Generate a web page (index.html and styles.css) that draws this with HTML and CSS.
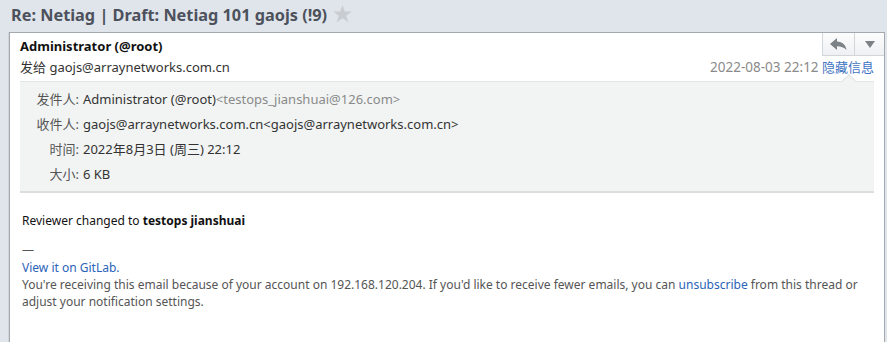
FILE: index.html
```html
<!DOCTYPE html>
<html lang="zh-CN">
<head>
  <meta charset="UTF-8">
  <title>Re: Netiag | Draft: Netiag 101 gaojs (!9)</title>
  <link rel="stylesheet" href="styles.css">
</head>
<body>
  <h1 class="subject">
    Re: Netiag | Draft: Netiag 101 gaojs (!9)
    <svg class="star" width="19" height="18" viewBox="0 0 24 23"><path d="M12 0l2.9 8.2H24l-7.3 5.4 2.8 8.6L12 16.9l-7.5 5.3 2.8-8.6L0 8.2h9.1z" fill="#c9cdd2"/></svg>
  </h1>

  <div class="message">
    <div class="msg-head">
      <div class="who">
        <div class="sender">Administrator (@root)</div>
        <div class="recipient">发给 gaojs@arraynetworks.com.cn</div>
      </div>
      <div class="side">
        <div class="tools">
          <span class="tool reply">
            <svg width="17" height="12" viewBox="0 0 17 12"><path d="M7 0L0 6l7 6V8.3c4 0 7 1.2 9.5 3.7C15.8 7.2 12.6 4 7 3.6z" fill="#7d8287"/></svg>
          </span>
          <span class="tool more">
            <svg width="10" height="7" viewBox="0 0 10 7"><path d="M0 0h10L5 7z" fill="#7d8287"/></svg>
          </span>
        </div>
        <div class="meta"><span class="date">2022-08-03 22:12</span> <a class="toggle" href="#">隐藏信息</a></div>
      </div>
    </div>

    <div class="details">
      <div class="row"><span class="label">发件人:</span> <span class="val">Administrator (@root)</span><span class="addr">&lt;testops_jianshuai@126.com&gt;</span></div>
      <div class="row"><span class="label">收件人:</span> <span class="val">gaojs@arraynetworks.com.cn</span><span class="val">&lt;gaojs@arraynetworks.com.cn&gt;</span></div>
      <div class="row"><span class="label">时间:</span> <span class="val">2022年8月3日 (周三) 22:12</span></div>
      <div class="row"><span class="label">大小:</span> <span class="val">6 KB</span></div>
    </div>

    <div class="content">
      <p class="change">Reviewer changed to <strong>testops jianshuai</strong></p>
      <div class="footer">
        <div class="dash">—</div>
        <a href="#">View it on GitLab.</a><br>
        You're receiving this email because of your account on 192.168.120.204. If you'd like to receive fewer emails, you can <a href="#">unsubscribe</a> from this thread or adjust your notification settings.
      </div>
    </div>
  </div>
</body>
</html>
```

FILE: styles.css
```css
body {
  margin: 0;
  background-color: #dfe5eb;
  font-family: "Noto Sans", "Noto Sans CJK SC", sans-serif;
  color: #222;
  overflow: hidden;
}

a {
  color: #2a63b8;
  text-decoration: none;
}

.subject {
  margin: 0;
  padding: 0 11px;
  height: 29px;
  display: flex;
  align-items: center;
  gap: 6px;
  font-size: 16.3px;
  font-weight: 700;
  color: #4c515c;
}

.star {
  margin-top: -1px;
}

.message {
  margin: 3px 2px 0 9px;
  border: 1px solid #a4a9ae;
  border-bottom: none;
  background-color: #fff;
  padding: 0 0 0 10px;
  height: 320px;
  box-shadow: -1px 0 0 #cfd5db;
}

.msg-head {
  display: flex;
  justify-content: space-between;
}

.sender {
  margin-top: 4px;
  font-size: 13px;
  font-weight: 700;
  color: #111;
}

.recipient {
  margin-top: 2px;
  font-size: 13px;
  color: #333;
}

.side {
  display: flex;
  flex-direction: column;
  align-items: flex-end;
}

.tools {
  display: flex;
  border: 1px solid #d3d6d9;
  border-top: none;
  border-right: none;
  background: linear-gradient(#fdfdfd, #eef0f2);
}

.tool {
  height: 22px;
  display: flex;
  align-items: center;
  justify-content: center;
}

.reply {
  width: 31px;
  border-right: 1px solid #d3d6d9;
}

.more {
  width: 29px;
}

.meta {
  margin: 1px 10px 0 0;
  font-size: 13px;
}

.date {
  color: #8a8a8a;
  font-size: 13.5px;
}

.toggle {
  color: #3f74c4;
}

.details {
  position: relative;
  margin: 5px 10px 0 0;
  padding: 4px 0 5px;
  background-color: #f1f4f3;
  border-top: 1px solid #e3e6e5;
  border-bottom: 2px solid #dcdedd;
  font-size: 13px;
}

.details::before {
  content: "";
  position: absolute;
  top: -6px;
  right: 20px;
  width: 9px;
  height: 9px;
  background-color: #f1f4f3;
  border-left: 1px solid #e3e6e5;
  border-top: 1px solid #e3e6e5;
  transform: rotate(45deg);
}

.row {
  display: flex;
  height: 25px;
  align-items: center;
}

.label {
  width: 59px;
  text-align: right;
  color: #555;
  margin-right: 4px;
}

.val {
  color: #333;
}

.addr {
  color: #8a8a8a;
}

.content {
  padding: 19px 12px 0 2px;
  font-size: 12px;
}

.change {
  margin: 0 0 12px;
  color: #111;
}

.footer {
  color: #555;
  line-height: 17px;
}

.dash {
  height: 18px;
}
```
